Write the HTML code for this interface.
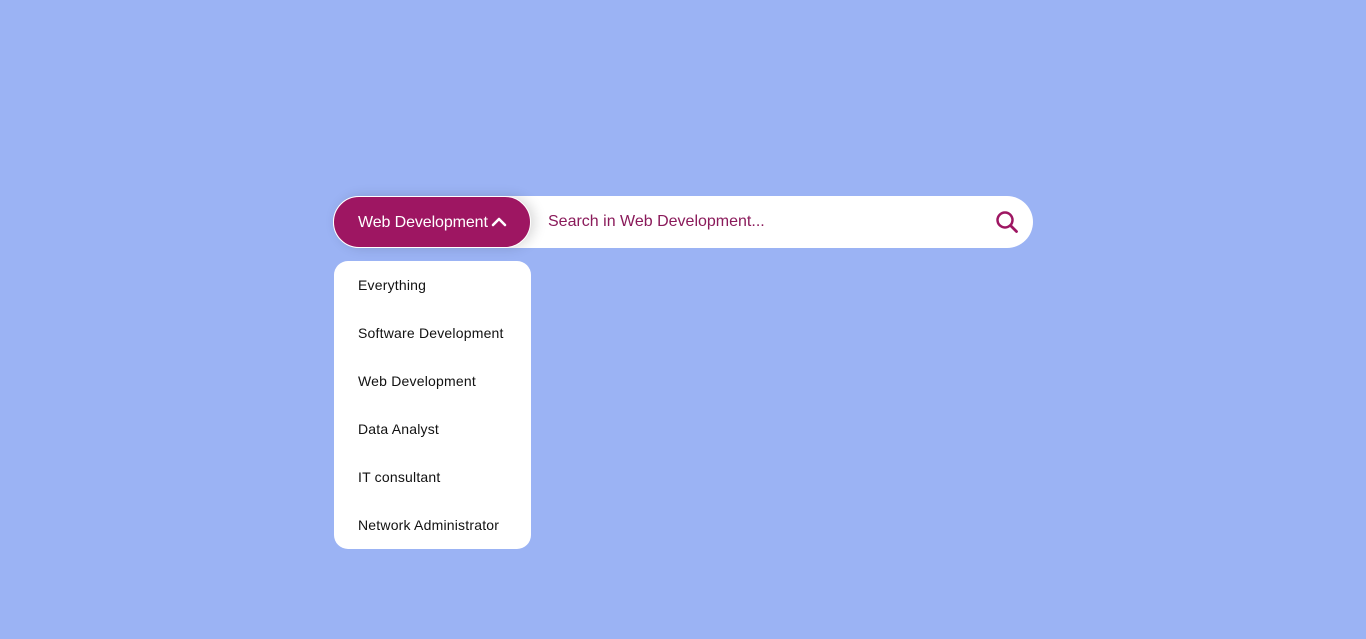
<!DOCTYPE html>
<html><head><style>
body{margin:0;width:1366px;height:639px;background:#9bb3f4;font-family:"Liberation Sans",sans-serif;position:relative;overflow:hidden}
.bar{position:absolute;left:333px;top:196px;width:700px;height:52px;background:#fff;border-radius:26px}
.btn{position:absolute;left:333px;top:196px;width:196px;height:50px;background:#9e1662;border:1px solid #fff;border-radius:26px;box-shadow:4px 0 12px rgba(0,0,0,.15);color:#fff;font-size:16px;line-height:51px;box-sizing:content-box}
.btn span{position:absolute;left:24px;letter-spacing:-0.1px}
.btn svg{position:absolute;left:157px;top:19px}
.ph{position:absolute;left:548px;top:213px;font-size:16px;color:#8a1a5a}
.srch{position:absolute;left:995px;top:210px}
.dd{position:absolute;left:334px;top:261px;width:197px;height:288px;background:#fff;border-radius:14px}
.dd div{position:absolute;left:24px;font-size:14px;color:#111;letter-spacing:0.2px}
</style></head><body>
<div class="bar"></div>
<div class="btn"><span>Web Development</span><svg width="16" height="12" viewBox="0 0 16 12"><path d="M2 9 L8 3 L14 9" fill="none" stroke="#fff" stroke-width="2.6" stroke-linecap="round" stroke-linejoin="round"/></svg></div>
<div class="ph">Search in Web Development...</div>
<svg class="srch" width="24" height="24" viewBox="0 0 24 24"><circle cx="10" cy="10" r="7.5" fill="none" stroke="#9e1662" stroke-width="2.5"/><path d="M15.5 15.5 L21.5 21.5" stroke="#9e1662" stroke-width="2.8" stroke-linecap="round"/></svg>
<div class="dd">
<div style="top:16px">Everything</div>
<div style="top:64px">Software Development</div>
<div style="top:112px">Web Development</div>
<div style="top:160px">Data Analyst</div>
<div style="top:208px">IT consultant</div>
<div style="top:256px">Network Administrator</div>
</div>
</body></html>
